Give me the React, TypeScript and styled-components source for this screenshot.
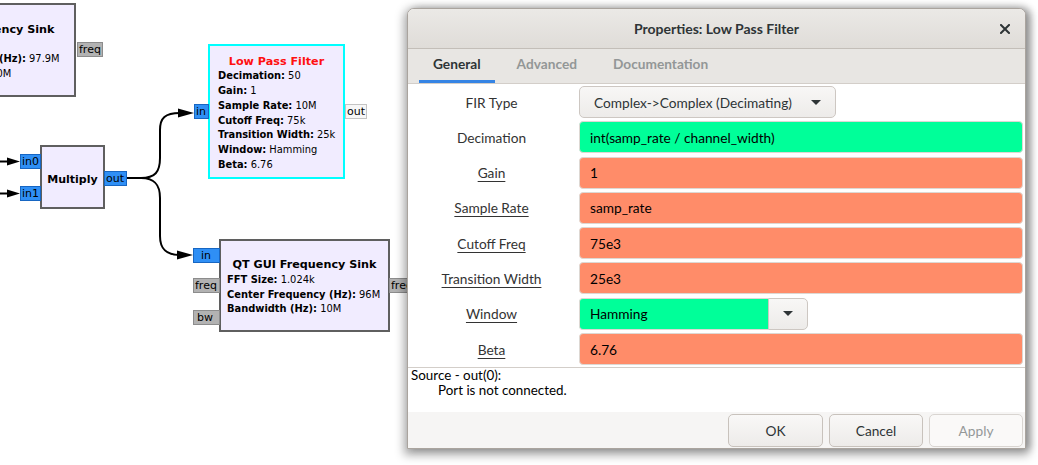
import React from "react";
import styled, { createGlobalStyle } from "styled-components";

const GlobalStyle = createGlobalStyle`
  html, body { margin: 0; padding: 0; background: #ffffff; }
  body { width: 1038px; height: 465px; overflow: hidden; }
  #root { width: 1038px; height: 465px; }
`;

const Stage = styled.div`
  position: relative;
  width: 1038px;
  height: 465px;
  overflow: hidden;
  background: #ffffff;
`;

const Canvas = styled.div`
  position: relative;
  width: 100%;
  height: 100%;
  font-family: "DejaVu Sans", Verdana, sans-serif;
  color: #000;
`;

const Wires = styled.svg`
  position: absolute;
  left: 0;
  top: 0;
  pointer-events: none;
`;

const Block = styled.div<{ $x: number; $y: number; $w: number; $h: number; $selected?: boolean; $pad?: number }>`
  position: absolute;
  left: ${(p) => p.$x}px;
  top: ${(p) => p.$y}px;
  width: ${(p) => p.$w}px;
  height: ${(p) => p.$h}px;
  box-sizing: border-box;
  background: #f1ecff;
  border: 2px solid ${(p) => (p.$selected ? "#00ffff" : "#5f5f5f")};
  display: flex;
  flex-direction: column;
  justify-content: center;
  padding: 4px 0 0 ${(p) => p.$pad ?? 8}px;
  white-space: nowrap;
  overflow: hidden;
`;

const BlockTitle = styled.div<{ $error?: boolean; $shift?: number }>`
  font-size: 11.2px;
  font-weight: 700;
  line-height: 14.8px;
  text-align: center;
  color: ${(p) => (p.$error ? "#ff1010" : "#000")};
  margin-left: ${(p) => p.$shift ?? (p.$error ? -8 : -6)}px;
`;

const Param = styled.div`
  font-size: 9.9px;
  line-height: 14.7px;
  color: #000;
`;

const Key = styled.span`
  font-weight: 700;
`;

const SoloTitle = styled.div`
  font-size: 11px;
  font-weight: 700;
  text-align: center;
  margin-left: -8px;
`;

type PortKind = "blue" | "gray" | "light";

const portBg: Record<PortKind, string> = { blue: "#2f8ff5", gray: "#b2b2b2", light: "#f7f7f7" };
const portBorder: Record<PortKind, string> = { blue: "#1766c2", gray: "#8c8c8c", light: "#c4c4c4" };

const Port = styled.div<{ $x: number; $y: number; $w: number; $kind: PortKind; $indent?: number }>`
  position: absolute;
  left: ${(p) => p.$x}px;
  top: ${(p) => p.$y}px;
  width: ${(p) => p.$w}px;
  height: 15px;
  box-sizing: border-box;
  background: ${(p) => portBg[p.$kind]};
  border: 1px solid ${(p) => portBorder[p.$kind]};
  font-size: 11px;
  line-height: 13px;
  padding-left: ${(p) => p.$indent ?? 1}px;
  color: #000;
  overflow: hidden;
  white-space: nowrap;
`;

/* ---------- dialog ---------- */

const Dialog = styled.div`
  position: absolute;
  left: 407px;
  top: 8px;
  width: 619px;
  height: 441px;
  box-sizing: border-box;
  border: 1px solid #aaa49e;
  border-radius: 7px 7px 0 0;
  background: #ffffff;
  display: flex;
  flex-direction: column;
  overflow: hidden;
  box-shadow: 0 3px 10px 3px rgba(0, 0, 0, 0.34), 5px 0 7px rgba(0, 0, 0, 0.22);
  font-family: Lato, "Noto Sans", sans-serif;
  font-size: 13.7px;
  color: #2e3436;
`;

const HeaderBar = styled.div`
  height: 39px;
  flex: none;
  display: grid;
  grid-template-columns: 1fr auto 1fr;
  align-items: center;
  background: linear-gradient(#ebe9e6, #dfdcd8);
  border-bottom: 1px solid #c3beb8;
`;

const HeaderTitle = styled.div`
  grid-column: 2;
  font-weight: 700;
  font-size: 14px;
  color: #2e3436;
`;

const CloseButton = styled.div`
  grid-column: 3;
  justify-self: end;
  margin-right: 15px;
  display: flex;
  align-items: center;
`;

const TabStrip = styled.div`
  height: 34px;
  flex: none;
  display: flex;
  gap: 8px;
  padding-left: 11px;
  background: #e8e6e3;
  border-bottom: 1px solid #d3cec9;
`;

const Tab = styled.div<{ $active?: boolean }>`
  display: flex;
  align-items: center;
  padding: 0 14px 6px;
  font-weight: 700;
  color: ${(p) => (p.$active ? "#2e3436" : "#939797")};
  box-shadow: ${(p) => (p.$active ? "inset 0 -3px 0 #3584e4" : "none")};
`;

const Form = styled.div`
  flex: none;
  display: grid;
  grid-template-columns: 167px 1fr;
  grid-auto-rows: 32px;
  column-gap: 4px;
  row-gap: 3.3px;
  align-items: center;
  padding: 2px 2px 2px 0;
  border-bottom: 1px solid #d3cec9;
`;

const Label = styled.div<{ $link?: boolean }>`
  text-align: center;
  color: #333;
  text-decoration: ${(p) => (p.$link ? "underline" : "none")};
  text-underline-offset: 3px;
  text-decoration-thickness: 1px;
`;

const Entry = styled.div<{ $tone: "float" | "int" }>`
  height: 32px;
  box-sizing: border-box;
  display: flex;
  align-items: center;
  padding-left: 10px;
  border: 1px solid #ddd8d3;
  border-radius: 4px;
  background: ${(p) => (p.$tone === "int" ? "#00ff99" : "#ff8c69")};
  color: #000;
`;

const Combo = styled.div`
  width: 257px;
  height: 32px;
  box-sizing: border-box;
  display: flex;
  align-items: center;
  justify-content: space-between;
  padding: 0 14px 0 14px;
  border: 1px solid #cdc7c2;
  border-radius: 5px;
  background: linear-gradient(#f8f7f6, #edebe9);
  color: #2e3436;
`;

const Caret = styled.span`
  width: 0;
  height: 0;
  border-left: 5px solid transparent;
  border-right: 5px solid transparent;
  border-top: 5px solid #2e3436;
`;

const EditCombo = styled.div`
  width: 229px;
  height: 32px;
  display: flex;
`;

const EditPart = styled.div`
  flex: 1;
  box-sizing: border-box;
  display: flex;
  align-items: center;
  padding-left: 10px;
  background: #00ff99;
  border: 1px solid #ddd8d3;
  border-right: none;
  border-radius: 4px 0 0 4px;
  color: #000;
`;

const DropPart = styled.div`
  width: 40px;
  box-sizing: border-box;
  display: flex;
  align-items: center;
  justify-content: center;
  border: 1px solid #cdc7c2;
  border-radius: 0 5px 5px 0;
  background: linear-gradient(#f8f7f6, #edebe9);
`;

const Messages = styled.div`
  flex: 1;
  padding: 0 3px;
  color: #000;
  line-height: 15px;
  font-size: 13.4px;
`;

const MsgLine = styled.div<{ $indent?: boolean }>`
  padding-left: ${(p) => (p.$indent ? 27 : 0)}px;
`;

const ButtonBar = styled.div`
  flex: none;
  display: flex;
  justify-content: flex-end;
  gap: 6px;
  padding: 2px 2px 1px;
  background: #f6f5f4;
`;

const Button = styled.div<{ $w: number; $disabled?: boolean }>`
  width: ${(p) => p.$w}px;
  height: 33px;
  box-sizing: border-box;
  display: flex;
  align-items: center;
  justify-content: center;
  border: 1px solid ${(p) => (p.$disabled ? "#d9d5d1" : "#c8c2bc")};
  border-radius: 5px;
  background: ${(p) => (p.$disabled ? "#faf9f8" : "linear-gradient(#f9f8f7, #edebe9)")};
  color: ${(p) => (p.$disabled ? "#949898" : "#2e3436")};
`;

const rows: { label: string; link: boolean; value: string; tone: "float" | "int" }[] = [
  { label: "Gain", link: true, value: "1", tone: "float" },
  { label: "Sample Rate", link: true, value: "samp_rate", tone: "float" },
  { label: "Cutoff Freq", link: true, value: "75e3", tone: "float" },
  { label: "Transition Width", link: true, value: "25e3", tone: "float" },
];

export default function App() {
  return (
    <Stage>
      <GlobalStyle />
      <Canvas>
        <Wires width={1038} height={465} viewBox="0 0 1038 465">
          <g fill="none" stroke="#000" strokeWidth={2}>
            <path d="M127 178 L141 178 C155 178 160 172 160 158 L160 130 C160 118 165 113 180 113" />
            <path d="M141 178 C155 178 160 185 160 198 L160 236 C160 248 165 255 180 255" />
            <path d="M0 161.5 L10 161.5" />
            <path d="M0 193.5 L10 193.5" />
          </g>
          <g fill="#000">
            <polygon points="178,108.5 194,113 178,117.5" />
            <polygon points="177,250.5 193,255 177,259.5" />
            <polygon points="7,157.5 20,161.5 7,165.5" />
            <polygon points="7,189.5 20,193.5 7,197.5" />
          </g>
        </Wires>

        <Block $x={-105} $y={3} $w={181} $h={94} $pad={0}>
          <BlockTitle $shift={-6}>QT GUI Frequency Sink</BlockTitle>
          <Param><Key>FFT Size:</Key> 1.024k</Param>
          <Param><Key>Center Frequency (Hz):</Key> 97.9M</Param>
          <Param><Key>Bandwidth (Hz):</Key> 10M</Param>
        </Block>
        <Port $x={77} $y={42} $w={26} $kind="gray">freq</Port>

        <Block $x={208} $y={44} $w={137} $h={135} $selected $pad={8}>
          <BlockTitle $error>Low Pass Filter</BlockTitle>
          <Param><Key>Decimation:</Key> 50</Param>
          <Param><Key>Gain:</Key> 1</Param>
          <Param><Key>Sample Rate:</Key> 10M</Param>
          <Param><Key>Cutoff Freq:</Key> 75k</Param>
          <Param><Key>Transition Width:</Key> 25k</Param>
          <Param><Key>Window:</Key> Hamming</Param>
          <Param><Key>Beta:</Key> 6.76</Param>
        </Block>
        <Port $x={194} $y={104} $w={15} $kind="blue">in</Port>
        <Port $x={345} $y={104} $w={22} $kind="light">out</Port>

        <Block $x={40} $y={145} $w={65} $h={64} $pad={8}>
          <SoloTitle>Multiply</SoloTitle>
        </Block>
        <Port $x={20} $y={154} $w={21} $kind="blue">in0</Port>
        <Port $x={20} $y={186} $w={21} $kind="blue">in1</Port>
        <Port $x={104} $y={171} $w={23} $kind="blue">out</Port>

        <Block $x={219} $y={239} $w={171} $h={93} $pad={6}>
          <BlockTitle>QT GUI Frequency Sink</BlockTitle>
          <Param><Key>FFT Size:</Key> 1.024k</Param>
          <Param><Key>Center Frequency (Hz):</Key> 96M</Param>
          <Param><Key>Bandwidth (Hz):</Key> 10M</Param>
        </Block>
        <Port $x={193} $y={248} $w={27} $kind="blue" $indent={7}>in</Port>
        <Port $x={193} $y={278} $w={27} $kind="gray">freq</Port>
        <Port $x={193} $y={310} $w={27} $kind="gray" $indent={3}>bw</Port>
        <Port $x={389} $y={278} $w={26} $kind="gray">freq</Port>
      </Canvas>

      <Dialog>
        <HeaderBar>
          <HeaderTitle>Properties: Low Pass Filter</HeaderTitle>
          <CloseButton>
            <svg width="10" height="10" viewBox="0 0 10 10">
              <path d="M1 1 L9 9 M9 1 L1 9" stroke="#2e3436" strokeWidth="2" strokeLinecap="square" />
            </svg>
          </CloseButton>
        </HeaderBar>
        <TabStrip>
          <Tab $active>General</Tab>
          <Tab>Advanced</Tab>
          <Tab>Documentation</Tab>
        </TabStrip>
        <Form>
          <Label>FIR Type</Label>
          <div>
            <Combo>
              <span>Complex-&gt;Complex (Decimating)</span>
              <Caret />
            </Combo>
          </div>
          <Label>Decimation</Label>
          <Entry $tone="int">int(samp_rate / channel_width)</Entry>
          {rows.map((r) => (
            <React.Fragment key={r.label}>
              <Label $link={r.link}>{r.label}</Label>
              <Entry $tone={r.tone}>{r.value}</Entry>
            </React.Fragment>
          ))}
          <Label $link>Window</Label>
          <EditCombo>
            <EditPart>Hamming</EditPart>
            <DropPart>
              <Caret />
            </DropPart>
          </EditCombo>
          <Label $link>Beta</Label>
          <Entry $tone="float">6.76</Entry>
        </Form>
        <Messages>
          <MsgLine>Source - out(0):</MsgLine>
          <MsgLine $indent>Port is not connected.</MsgLine>
        </Messages>
        <ButtonBar>
          <Button $w={95}>OK</Button>
          <Button $w={94}>Cancel</Button>
          <Button $w={94} $disabled>Apply</Button>
        </ButtonBar>
      </Dialog>
    </Stage>
  );
}
